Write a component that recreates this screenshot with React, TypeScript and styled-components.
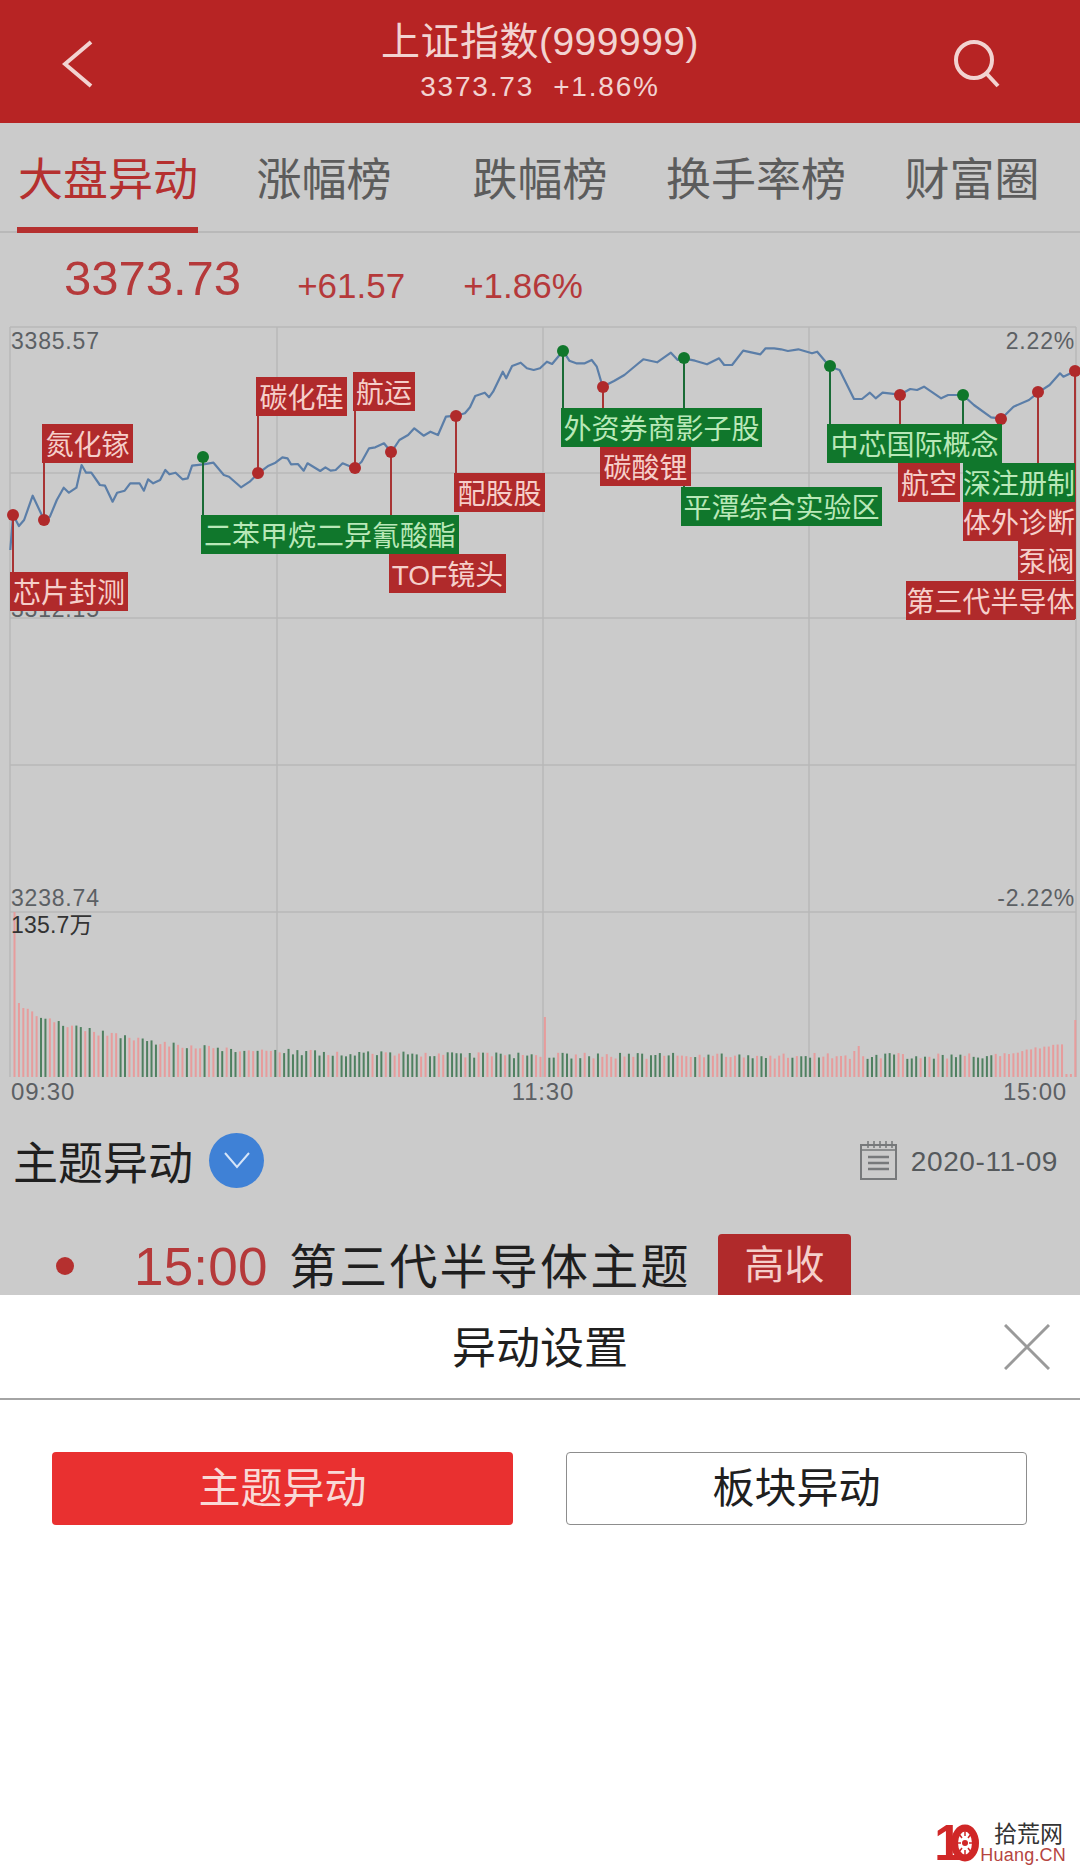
import React from "react";
import styled, { createGlobalStyle } from "styled-components";

const GlobalStyle = createGlobalStyle`
  html, body {
    margin: 0;
    padding: 0;
    background: #fff;
  }
  body {
    font-family: "Liberation Sans", "Noto Sans CJK SC", sans-serif;
  }
`;

const Page = styled.div`
  width: 1080px;
  height: 1874px;
  display: flex;
  flex-direction: column;
  overflow: hidden;
`;

const Dimmed = styled.div`
  height: 1295px;
  flex: none;
  background: #cbcbcb;
  overflow: hidden;
`;

const Header = styled.header`
  height: 123px;
  background: #b72424;
  color: #f2d3d1;
  display: grid;
  grid-template-columns: 1fr auto 1fr;
  align-items: center;
  padding: 0 62px;
`;

const HeaderIcon = styled.svg<{ $end?: boolean }>`
  margin: 4px ${(p) => (p.$end ? "18px" : "0")} 0 0;
  justify-self: ${(p) => (p.$end ? "end" : "start")};
`;

const HeaderTitle = styled.div`
  display: flex;
  flex-direction: column;
  align-items: center;
  padding-top: 1px;
`;

const TitleMain = styled.div`
  font-size: 39px;
  line-height: 46px;
  letter-spacing: 0.5px;
`;

const TitleSub = styled.div`
  font-size: 28px;
  line-height: 36px;
  margin-top: 4px;
  letter-spacing: 1.8px;
  white-space: pre;
`;

const Tabs = styled.nav`
  height: 110px;
  box-sizing: border-box;
  display: grid;
  grid-template-columns: repeat(5, 1fr);
  border-bottom: 2px solid #b9b9b9;
`;

const Tab = styled.div<{ $active?: boolean }>`
  font-size: 45px;
  color: ${(p) => (p.$active ? "#b5302f" : "#5c5c5c")};
  display: flex;
  align-items: center;
  justify-content: center;
  position: relative;
  padding-bottom: 2px;

  &::after {
    content: "";
    display: ${(p) => (p.$active ? "block" : "none")};
    position: absolute;
    left: 17px;
    width: 181px;
    bottom: -2px;
    height: 6px;
    background: #b5302f;
  }
`;

const QuoteRow = styled.div`
  height: 87px;
  display: flex;
  align-items: flex-start;
  padding-left: 64px;
  color: #b5393a;
`;

const QuotePrice = styled.span`
  font-size: 49px;
  line-height: 88px;
  margin: 1px 56px 0 0;
`;

const QuoteChange = styled.span`
  font-size: 35px;
  line-height: 40px;
  margin: 33px 58px 0 0;
`;

const Chart = styled.div`
  position: relative;
  height: 760px;
`;

const ChartSvg = styled.svg`
  display: block;
`;

const AxisLabel = styled.span<{ $top: number; $right?: boolean; $dark?: boolean }>`
  position: absolute;
  top: ${(p) => p.$top}px;
  ${(p) => (p.$right ? "right: 5px;" : "left: 11px;")}
  font-size: 23px;
  line-height: 26px;
  letter-spacing: ${(p) => (p.$dark ? "0.2px" : "0.8px")};
  color: ${(p) => (p.$dark ? "#333" : "#5c6064")};
`;

const Tag = styled.span<{ $left: number; $top: number; $width: number; $tone: "up" | "down" }>`
  position: absolute;
  left: ${(p) => p.$left}px;
  top: ${(p) => p.$top}px;
  width: ${(p) => p.$width}px;
  height: 39px;
  box-sizing: border-box;
  padding-bottom: 2px;
  display: flex;
  align-items: center;
  justify-content: center;
  white-space: nowrap;
  font-size: 28px;
  background: ${(p) => (p.$tone === "up" ? "#b02a2b" : "#10772c")};
  color: ${(p) => (p.$tone === "up" ? "#f5cfca" : "#b9e8b8")};
`;

const TimeAxis = styled.div`
  height: 30px;
  box-sizing: border-box;
  padding: 0 13px 6px 11px;
  display: flex;
  justify-content: space-between;
  align-items: center;
  font-size: 24px;
  letter-spacing: 0.8px;
  color: #5c6064;
`;

const MidTime = styled.span`
  margin-left: 8px;
`;

const SectionHead = styled.div`
  height: 100px;
  display: flex;
  align-items: center;
  padding: 0 22px 0 13px;
`;

const SectionTitle = styled.span`
  font-size: 45px;
  color: #1f1f1f;
`;

const ChevronBadge = styled.span`
  width: 55px;
  height: 55px;
  margin-left: 16px;
  border-radius: 50%;
  background: #3f81d6;
  display: flex;
  align-items: center;
  justify-content: center;
`;

const DateBox = styled.div`
  margin-left: auto;
  display: flex;
  align-items: center;
  gap: 14px;
  font-size: 28px;
  letter-spacing: 0.6px;
  color: #55595c;
`;

const DateText = styled.span`
  padding-top: 3px;
`;

const ListRow = styled.div`
  height: 112px;
  display: flex;
  align-items: center;
  padding-left: 56px;
`;

const ListDot = styled.span`
  width: 18px;
  height: 18px;
  border-radius: 50%;
  background: #b5302f;
`;

const ListTime = styled.span`
  margin-left: 60px;
  width: 155px;
  font-size: 53px;
  letter-spacing: 0.2px;
  color: #b5393a;
`;

const ListTitle = styled.span`
  font-size: 48px;
  line-height: 48px;
  letter-spacing: 2.2px;
  color: #1f1f1f;
  width: 429px;
  padding-top: 3px;
`;

const ListBadge = styled.span`
  width: 133px;
  height: 64px;
  padding-bottom: 2px;
  box-sizing: border-box;
  border-radius: 4px;
  background: #b02a2b;
  color: #f5cfca;
  font-size: 40px;
  line-height: 40px;
  display: flex;
  align-items: center;
  justify-content: center;
`;

const Sheet = styled.section`
  flex: 1;
  background: #fff;
  position: relative;
`;

const SheetHead = styled.div`
  height: 105px;
  box-sizing: border-box;
  border-bottom: 2px solid #a4a4a4;
  padding-bottom: 3px;
  position: relative;
  display: flex;
  align-items: center;
  justify-content: center;
  font-size: 44px;
  color: #1f1f1f;
`;

const CloseIcon = styled.svg`
  position: absolute;
  right: 30px;
  top: 29px;
`;

const ButtonRow = styled.div`
  display: flex;
  gap: 53px;
  padding: 52px 52px 0;
`;

const ModeButton = styled.button<{ $active?: boolean }>`
  width: 461px;
  height: 73px;
  box-sizing: border-box;
  border-radius: 4px;
  font: inherit;
  font-size: 42px;
  line-height: 42px;
  padding: 0;
  border: ${(p) => (p.$active ? "none" : "1.5px solid #8d8d8d")};
  background: ${(p) => (p.$active ? "#e93030" : "#fff")};
  color: ${(p) => (p.$active ? "#f9d9d6" : "#1f1f1f")};
`;

const Watermark = styled.div`
  position: absolute;
  right: 14px;
  bottom: 10px;
  display: flex;
  align-items: center;
`;

const WatermarkOne = styled.span`
  font-size: 50px;
  line-height: 40px;
  font-weight: 700;
  color: #d02727;
  width: 17px;
  letter-spacing: -4px;
`;

const WatermarkText = styled.div`
  display: flex;
  flex-direction: column;
  align-items: flex-end;
  margin-left: 1px;
`;

const WatermarkName = styled.span`
  font-size: 23px;
  line-height: 24px;
  margin-right: 3px;
  color: #333;
`;

const WatermarkDomain = styled.span`
  font-size: 18px;
  line-height: 18px;
  letter-spacing: 0.2px;
  color: #b5453f;
`;

// price line, traced from two crops of the chart
const trace = (originX: number, pts: number[][]) =>
  pts.map(([x, y]) => [+(originX + x / 2.904).toFixed(1), +(320 + y / 3).toFixed(1)]);

const pricePoints = [
  ...trace(0, [
    [30, 690], [38, 585], [55, 618], [70, 600], [95, 527], [128, 600], [145, 590], [165, 540], [185, 503],
    [200, 518], [222, 503], [237, 435], [250, 458], [265, 458], [290, 495], [305, 497], [327, 545], [340, 518],
    [362, 512], [378, 490], [405, 490], [418, 512], [430, 478], [445, 490], [465, 480], [480, 450], [492, 463],
    [510, 458], [530, 478], [545, 475], [558, 437], [590, 433], [620, 428], [650, 465], [665, 470], [700, 502],
    [725, 485], [750, 460], [780, 437], [800, 428], [820, 412], [835, 415], [845, 433], [865, 432], [882, 452],
    [893, 430], [930, 453], [945, 442], [960, 452], [975, 450], [995, 430], [1030, 445], [1050, 425], [1072, 385],
    [1090, 382], [1115, 370], [1136, 397], [1160, 360], [1185, 345], [1203, 325], [1230, 347], [1250, 335],
    [1272, 345], [1295, 290], [1325, 287], [1350, 280], [1365, 262], [1380, 228], [1408, 218], [1420, 232],
    [1432, 215], [1460, 155], [1470, 175], [1487, 138], [1512, 128], [1530, 145], [1550, 150],
  ]),
  ...trace(540, [
    [0, 145], [20, 125], [35, 132], [67, 92], [85, 122], [105, 130], [130, 130], [150, 120], [165, 140], [182, 200],
    [215, 183], [245, 165], [280, 135], [300, 118], [340, 127], [380, 98], [400, 120], [417, 115], [450, 122],
    [485, 133], [520, 115], [535, 135], [558, 135], [590, 92], [640, 103], [655, 85], [680, 85], [700, 88], [720, 93],
    [750, 88], [790, 100], [805, 95], [842, 140], [870, 150], [912, 237], [935, 237], [958, 218], [975, 235],
    [995, 218], [1045, 224], [1075, 207], [1095, 210], [1115, 200], [1165, 235], [1185, 225], [1228, 225], [1260, 255],
    [1310, 292], [1340, 296], [1375, 260], [1420, 240], [1447, 217], [1480, 195], [1510, 160], [1520, 170], [1553, 154],
  ]),
];

type Tone = "up" | "down";

const markers: { x: number; y: number; end: number; tone: Tone }[] = [
  { x: 13, y: 515, end: 572, tone: "up" },
  { x: 44, y: 520, end: 463, tone: "up" },
  { x: 203, y: 457, end: 515, tone: "down" },
  { x: 258, y: 473, end: 416, tone: "up" },
  { x: 355, y: 468, end: 410, tone: "up" },
  { x: 391, y: 452, end: 554, tone: "up" },
  { x: 456, y: 416, end: 473, tone: "up" },
  { x: 563, y: 351, end: 408, tone: "down" },
  { x: 603, y: 387, end: 447, tone: "up" },
  { x: 684, y: 358, end: 487, tone: "down" },
  { x: 830, y: 366, end: 424, tone: "down" },
  { x: 900, y: 395, end: 463, tone: "up" },
  { x: 963, y: 395, end: 463, tone: "down" },
  { x: 1001, y: 419, end: 424, tone: "up" },
  { x: 1038, y: 392, end: 463, tone: "up" },
  { x: 1075, y: 371, end: 619, tone: "up" },
];

const tags: { text: string; left: number; top: number; width: number; tone: Tone }[] = [
  { text: "芯片封测", left: 10, top: 252, width: 118, tone: "up" },
  { text: "氮化镓", left: 42, top: 104, width: 91, tone: "up" },
  { text: "碳化硅", left: 256, top: 57, width: 91, tone: "up" },
  { text: "航运", left: 353, top: 52, width: 62, tone: "up" },
  { text: "配股股", left: 454, top: 153, width: 91, tone: "up" },
  { text: "二苯甲烷二异氰酸酯", left: 201, top: 195, width: 258, tone: "down" },
  { text: "TOF镜头", left: 389, top: 234, width: 117, tone: "up" },
  { text: "外资券商影子股", left: 561, top: 88, width: 201, tone: "down" },
  { text: "碳酸锂", left: 600, top: 127, width: 91, tone: "up" },
  { text: "平潭综合实验区", left: 681, top: 167, width: 201, tone: "down" },
  { text: "中芯国际概念", left: 827, top: 104, width: 175, tone: "down" },
  { text: "航空", left: 898, top: 143, width: 62, tone: "up" },
  { text: "深注册制", left: 963, top: 143, width: 112, tone: "down" },
  { text: "体外诊断", left: 963, top: 182, width: 112, tone: "up" },
  { text: "泵阀", left: 1018, top: 221, width: 57, tone: "up" },
  { text: "第三代半导体", left: 906, top: 261, width: 169, tone: "up" },
];

const VOLUME_BASE = 1077;

// minute volume bars: fixed seed so the picture stays the same
const volumeBars = (() => {
  let seed = 41;
  const next = () => {
    seed = (seed * 16807) % 2147483647;
    return seed / 2147483647;
  };
  const bars: { x: number; h: number; up: boolean }[] = [];
  for (let i = 0; i < 241; i++) {
    const x = 14.5 + i * 4.42;
    let h = 18 + 50 * Math.exp(-i / 25) + next() * 6;
    if (i === 0) h = 165;
    if (i === 1) h = 74;
    if (i > 222) h = 20 + (i - 222) * 0.8 + next() * 3;
    if (i === 239 || i === 238) h = 3;
    if (i === 240) h = 57;
    if (i === 120) h = 60;
    if (i === 191) h = 31;
    if (i === 190) h = 26;
    bars.push({ x, h, up: i === 0 || i === 120 || i > 222 || next() > 0.5 });
  }
  return bars;
})();

const GearZero = () => (
  <svg width="28" height="40" viewBox="0 0 28 40">
    <ellipse cx="14" cy="20" rx="10.5" ry="15" fill="#fff" stroke="#d02727" strokeWidth="7" />
    <circle cx="14" cy="20" r="3" fill="#d02727" />
    <path d="M14 8v5M14 27v5M6 20h4M18 20h4M8 11l3 4M20 11l-3 4M8 29l3-4M20 29l-3-4" stroke="#d02727" strokeWidth="1.5" />
  </svg>
);

export default function App() {
  return (
    <Page>
      <GlobalStyle />
      <Dimmed>
        <Header>
          <HeaderIcon width="32" height="50" viewBox="0 0 32 50" fill="none" stroke="#f2d3d1" strokeWidth="4">
            <path d="M29 3L3 25l26 22" />
          </HeaderIcon>
          <HeaderTitle>
            <TitleMain>上证指数(999999)</TitleMain>
            <TitleSub>3373.73  +1.86%</TitleSub>
          </HeaderTitle>
          <HeaderIcon $end width="48" height="48" viewBox="0 0 48 48" fill="none" stroke="#f2d3d1" strokeWidth="4">
            <circle cx="22" cy="20" r="18" />
            <path d="M34 33l12 13" />
          </HeaderIcon>
        </Header>
        <Tabs>
          <Tab $active>大盘异动</Tab>
          <Tab>涨幅榜</Tab>
          <Tab>跌幅榜</Tab>
          <Tab>换手率榜</Tab>
          <Tab>财富圈</Tab>
        </Tabs>
        <QuoteRow>
          <QuotePrice>3373.73</QuotePrice>
          <QuoteChange>+61.57</QuoteChange>
          <QuoteChange>+1.86%</QuoteChange>
        </QuoteRow>
        <Chart>
          <ChartSvg width="1080" height="760" viewBox="0 320 1080 760" fill="none">
            <g stroke="#b9b9b9" strokeWidth="1.5">
              {[327, 473, 618, 765, 912].map((y) => (
                <path key={y} d={`M10 ${y}H1076`} />
              ))}
              {[10, 277, 543, 809, 1076].map((x) => (
                <path key={x} d={`M${x} 327V1077`} />
              ))}
            </g>
            {volumeBars.map((b) => (
              <rect
                key={b.x}
                x={b.x - 1}
                y={VOLUME_BASE - b.h}
                width="2"
                height={b.h}
                fill={b.up ? "#e79c9c" : "#4f8060"}
              />
            ))}
            <polyline points={pricePoints.join(" ")} stroke="#5b7ea8" strokeWidth="2.2" strokeLinejoin="round" />
            {markers.map((m) => (
              <g key={m.x}>
                <path d={`M${m.x} ${m.y}V${m.end}`} stroke={m.tone === "up" ? "#a83434" : "#1a6b36"} strokeWidth="2" />
                <circle cx={m.x} cy={m.y} r="6" fill={m.tone === "up" ? "#b02a2b" : "#10772c"} />
              </g>
            ))}
          </ChartSvg>
          <AxisLabel $top={8}>3385.57</AxisLabel>
          <AxisLabel $top={8} $right>2.22%</AxisLabel>
          <AxisLabel $top={276}>3312.15</AxisLabel>
          <AxisLabel $top={565}>3238.74</AxisLabel>
          <AxisLabel $top={565} $right>-2.22%</AxisLabel>
          <AxisLabel $top={592} $dark>135.7万</AxisLabel>
          {tags.map((t) => (
            <Tag key={t.text} $left={t.left} $top={t.top} $width={t.width} $tone={t.tone}>
              {t.text}
            </Tag>
          ))}
        </Chart>
        <TimeAxis>
          <span>09:30</span>
          <MidTime>11:30</MidTime>
          <span>15:00</span>
        </TimeAxis>
        <SectionHead>
          <SectionTitle>主题异动</SectionTitle>
          <ChevronBadge>
            <svg width="28" height="18" viewBox="0 0 28 18" fill="none" stroke="#d6e5f8" strokeWidth="2">
              <path d="M2 2l12 14L26 2" />
            </svg>
          </ChevronBadge>
          <DateBox>
            <svg width="37" height="40" viewBox="0 0 37 40" fill="none" stroke="#77797b" strokeWidth="2">
              <rect x="1" y="5" width="35" height="34" />
              <path d="M1 10h35M8 1v7M14 1v7M20 1v7M26 1v7M32 1v7" strokeWidth="1.5" />
              <path d="M8 17h21M8 23h21M8 29h21" strokeWidth="2.5" />
            </svg>
            <DateText>2020-11-09</DateText>
          </DateBox>
        </SectionHead>
        <ListRow>
          <ListDot />
          <ListTime>15:00</ListTime>
          <ListTitle>第三代半导体主题</ListTitle>
          <ListBadge>高收</ListBadge>
        </ListRow>
      </Dimmed>
      <Sheet>
        <SheetHead>
          异动设置
          <CloseIcon width="46" height="46" viewBox="0 0 46 46" fill="none" stroke="#9a9a9a" strokeWidth="3">
            <path d="M1 1l44 44M45 1L1 45" />
          </CloseIcon>
        </SheetHead>
        <ButtonRow>
          <ModeButton $active>主题异动</ModeButton>
          <ModeButton>板块异动</ModeButton>
        </ButtonRow>
        <Watermark>
          <WatermarkOne>1</WatermarkOne>
          <GearZero />
          <WatermarkText>
            <WatermarkName>拾荒网</WatermarkName>
            <WatermarkDomain>Huang.CN</WatermarkDomain>
          </WatermarkText>
        </Watermark>
      </Sheet>
    </Page>
  );
}
